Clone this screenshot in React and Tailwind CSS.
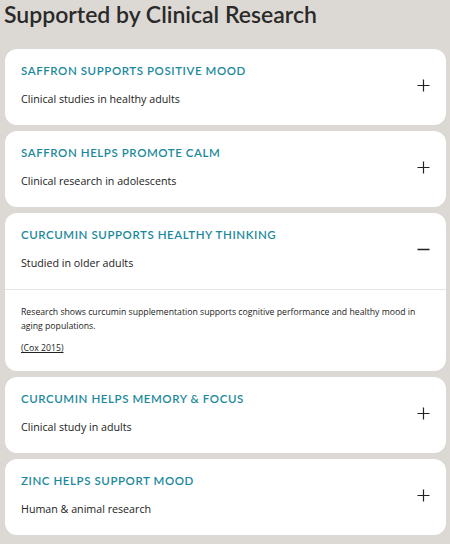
import React, { useState } from "react";

const items = [
  {
    title: "Saffron supports positive mood",
    sub: "Clinical studies in healthy adults",
  },
  {
    title: "Saffron helps promote calm",
    sub: "Clinical research in adolescents",
  },
  {
    title: "Curcumin supports healthy thinking",
    sub: "Studied in older adults",
    body: "Research shows curcumin supplementation supports cognitive performance and healthy mood in aging populations.",
    cite: "(Cox 2015)",
  },
  {
    title: "Curcumin helps memory & focus",
    sub: "Clinical study in adults",
  },
  {
    title: "Zinc helps support mood",
    sub: "Human & animal research",
  },
];

const PlusIcon = () => (
  <svg width="13" height="13" viewBox="0 0 13 13" className="text-[#222]">
    <path d="M6.5 0.5v12M0.5 6.5h12" stroke="currentColor" strokeWidth="1.2" />
  </svg>
);

const MinusIcon = () => (
  <svg width="13" height="13" viewBox="0 0 13 13" className="text-[#222]">
    <path d="M0.5 6.5h12" stroke="currentColor" strokeWidth="1.4" />
  </svg>
);

const Card = ({ item, open, onToggle }) => (
  <div className="bg-white rounded-[12px] overflow-hidden">
    <button
      onClick={onToggle}
      className="w-full flex items-center justify-between pl-4 pr-4 pt-[15px] pb-[19px] text-left"
    >
      <div className="flex flex-col gap-[14px]">
        <span className="uppercase text-[11.5px] leading-[14px] font-semibold tracking-[0.05em] text-[#1a899b] [font-family:Lato,sans-serif]">
          {item.title}
        </span>
        <span className="text-[10.7px] leading-[14px] text-[#222] [font-family:'Open_Sans',sans-serif]">
          {item.sub}
        </span>
      </div>
      {open ? <MinusIcon /> : <PlusIcon />}
    </button>
    {open && item.body && (
      <div className="border-t border-[#e4e4e4] px-4 pt-[15px] pb-[16px] [font-family:'Open_Sans',sans-serif] text-[#222]">
        <p className="text-[8.7px] leading-[14px]">{item.body}</p>
        <p className="mt-2 text-[8.7px] leading-[14px]">
          <span className="underline">{item.cite}</span>
        </p>
      </div>
    )}
  </div>
);

export default function App() {
  const [openIdx, setOpenIdx] = useState(2);
  return (
    <div className="w-[450px] h-[544px] bg-[#dcd9d4] px-[5px] overflow-hidden">
      <h2 className="text-[23px] leading-[28px] font-semibold text-[#2a2a2a] -ml-[1px] [font-family:Lato,sans-serif]">
        Supported by Clinical Research
      </h2>
      <div className="mt-[21px] w-[441px] flex flex-col gap-[6px]">
        {items.map((item, i) => (
          <Card
            key={i}
            item={item}
            open={openIdx === i}
            onToggle={() => setOpenIdx(openIdx === i ? -1 : i)}
          />
        ))}
      </div>
    </div>
  );
}
